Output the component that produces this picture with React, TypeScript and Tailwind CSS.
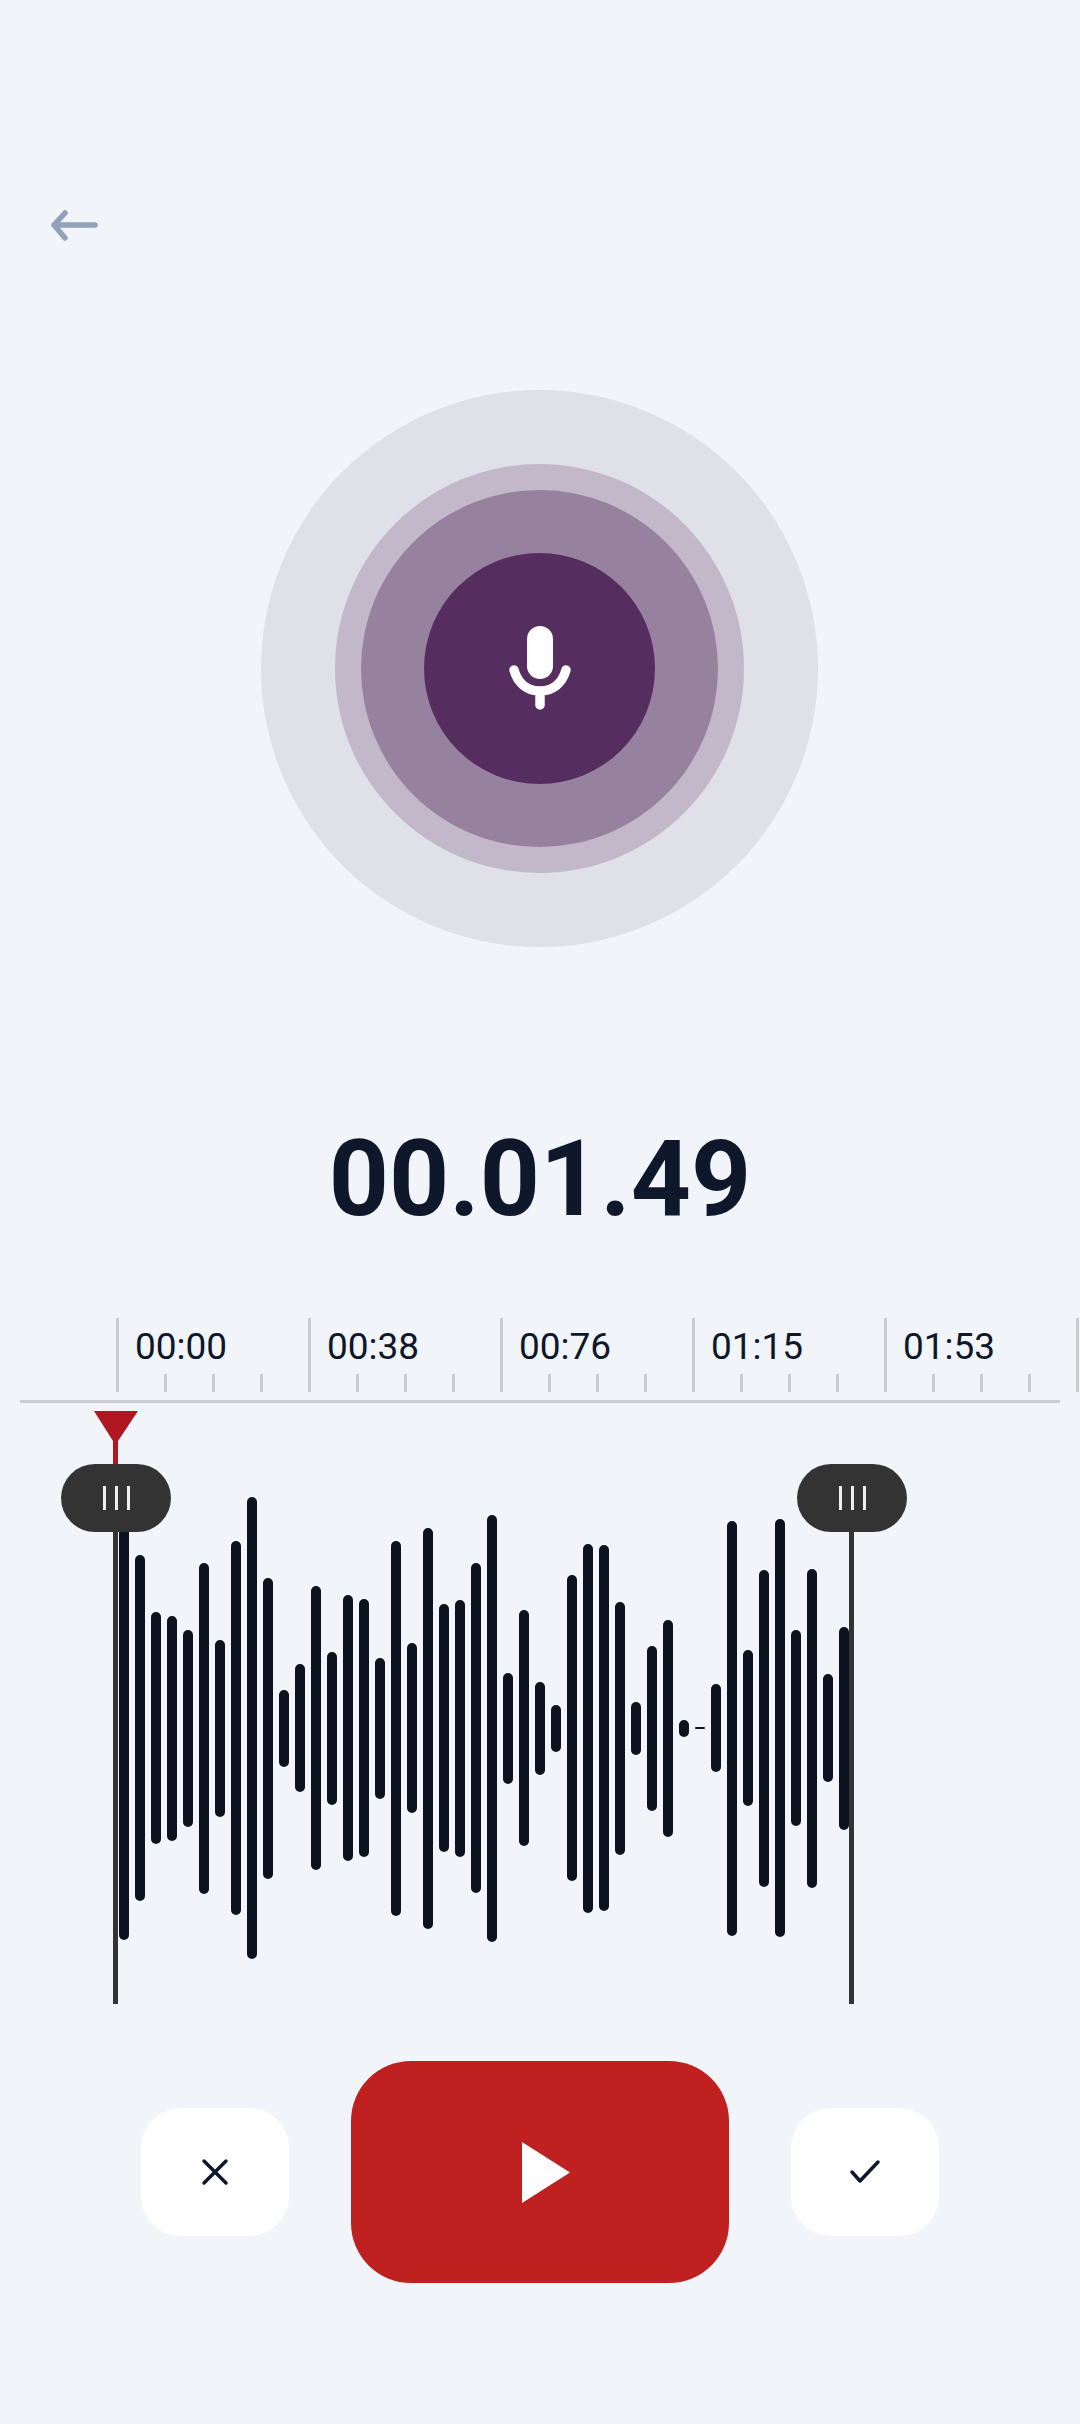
const BAR_HEIGHTS = [
  423, 346, 232, 225, 197, 331, 177, 374, 462, 301, 77, 128, 284, 153, 266, 258,
  141, 375, 170, 401, 248, 257, 330, 427, 111, 236, 93, 47, 306, 369, 366, 253,
  53, 165, 217, 17, 2, 88, 415, 156, 317, 418, 196, 319, 108, 203,
];

const TIME_MARKS = ["00:00", "00:38", "00:76", "01:15", "01:53"];

function BackArrow() {
  return (
    <svg width="52" height="36" viewBox="0 0 52 36" fill="none" className="text-slate-400">
      <path
        d="M47 18H6M17 6 6 18l11 13"
        stroke="currentColor"
        strokeWidth="5.5"
        strokeLinecap="round"
        strokeLinejoin="round"
      />
    </svg>
  );
}

function MicIcon() {
  return (
    <svg width="64" height="86" viewBox="0 0 64 86" fill="none">
      <rect x="19" y="0" width="26" height="53" rx="13" fill="white" />
      <path
        d="M6 44C10 58 20 65 32 65C44 65 54 58 58 44M32 65V79"
        stroke="white"
        strokeWidth="9.5"
        strokeLinecap="round"
      />
    </svg>
  );
}

function RecordingRings() {
  return (
    <div className="mt-[147px] flex justify-center pr-[1px]">
      <div className="flex h-[557px] w-[557px] items-center justify-center rounded-full bg-[#e0e0e8]">
        <div className="flex h-[409px] w-[409px] items-center justify-center rounded-full bg-[#c2b8ca]">
          <div className="flex h-[357px] w-[357px] items-center justify-center rounded-full bg-[#96819f]">
            <div className="flex h-[231px] w-[231px] items-center justify-center rounded-full bg-[#552e5f]">
              <MicIcon />
            </div>
          </div>
        </div>
      </div>
    </div>
  );
}

function Ruler() {
  return (
    <div className="mt-[77px]">
      <div className="flex h-[74px] overflow-hidden pl-[116px]">
        {TIME_MARKS.map((mark) => (
          <div key={mark} className="flex w-[192px] shrink-0 flex-col justify-between border-l-[3px] border-[#cccccc]">
            <span className="pl-[16px] pt-[8px] text-[37px] leading-[42px] text-slate-900">{mark}</span>
            <div className="flex gap-[45px] pl-[45px]">
              <div className="h-[18px] w-[3px] bg-[#cccccc]" />
              <div className="h-[18px] w-[3px] bg-[#cccccc]" />
              <div className="h-[18px] w-[3px] bg-[#cccccc]" />
            </div>
          </div>
        ))}
        <div className="w-[3px] shrink-0 bg-[#cccccc]" />
      </div>
      <div className="mx-[20px] mt-[8px] h-[3px] bg-[#cccccc]" />
    </div>
  );
}

function TrimHandle({ className }: { className: string }) {
  return (
    <div className={`absolute bottom-0 top-[53px] flex w-[110px] flex-col ${className}`}>
      <div className="flex h-[68px] w-full items-center justify-center gap-[9px] rounded-[34px] bg-[#333333]">
        <div className="h-[24px] w-[3px] bg-[#eeeeee]" />
        <div className="h-[24px] w-[3px] bg-[#eeeeee]" />
        <div className="h-[24px] w-[3px] bg-[#eeeeee]" />
      </div>
      <div className="ml-[52px] w-[5px] flex-1 bg-[#333333]" />
    </div>
  );
}

function Waveform() {
  return (
    <div className="relative mt-[8px] h-[593px] pt-[77px]">
      <div className="ml-[119px] flex h-[480px] items-center gap-[6px]">
        {BAR_HEIGHTS.map((height, i) => (
          <div key={i} className="w-[10px] shrink-0 rounded-[5px] bg-[#0c121e]" style={{ height }} />
        ))}
      </div>
      <svg width="44" height="53" viewBox="0 0 44 53" className="absolute left-[94px] top-0">
        <polygon points="0,0 44,0 24,30 24,53 19,53 19,30" fill="#b01722" />
      </svg>
      <TrimHandle className="left-[61px]" />
      <TrimHandle className="left-[797px]" />
    </div>
  );
}

function Controls() {
  return (
    <div className="mt-[57px] flex items-center justify-center gap-[62px]">
      <button className="flex h-[128px] w-[148px] items-center justify-center rounded-[40px] bg-white">
        <svg width="28" height="28" viewBox="0 0 28 28" fill="none" className="mr-[1px]">
          <path d="M3 3 25 25M25 3 3 25" stroke="#0f172a" strokeWidth="3.5" strokeLinecap="round" />
        </svg>
      </button>
      <button className="flex h-[222px] w-[378px] items-center justify-center rounded-[60px] bg-[#bf2020]">
        <svg width="48" height="61" viewBox="0 0 48 61" className="ml-[12px]">
          <polygon points="0,0 48,30.5 0,61" fill="white" />
        </svg>
      </button>
      <button className="flex h-[128px] w-[148px] items-center justify-center rounded-[40px] bg-white">
        <svg width="32" height="26" viewBox="0 0 32 26" fill="none">
          <path d="M3 13 11 22 29 3" stroke="#0f172a" strokeWidth="3.5" strokeLinecap="round" strokeLinejoin="round" />
        </svg>
      </button>
    </div>
  );
}

export default function App() {
  return (
    <div className="h-[2424px] w-[1080px] overflow-hidden bg-slate-100 font-['Roboto',sans-serif]">
      <div className="pl-[48px] pt-[207px]">
        <BackArrow />
      </div>
      <RecordingRings />
      <h1 className="mt-[172px] text-center text-[105px] font-bold leading-[122px] text-slate-900">00.01.49</h1>
      <Ruler />
      <Waveform />
      <Controls />
    </div>
  );
}
